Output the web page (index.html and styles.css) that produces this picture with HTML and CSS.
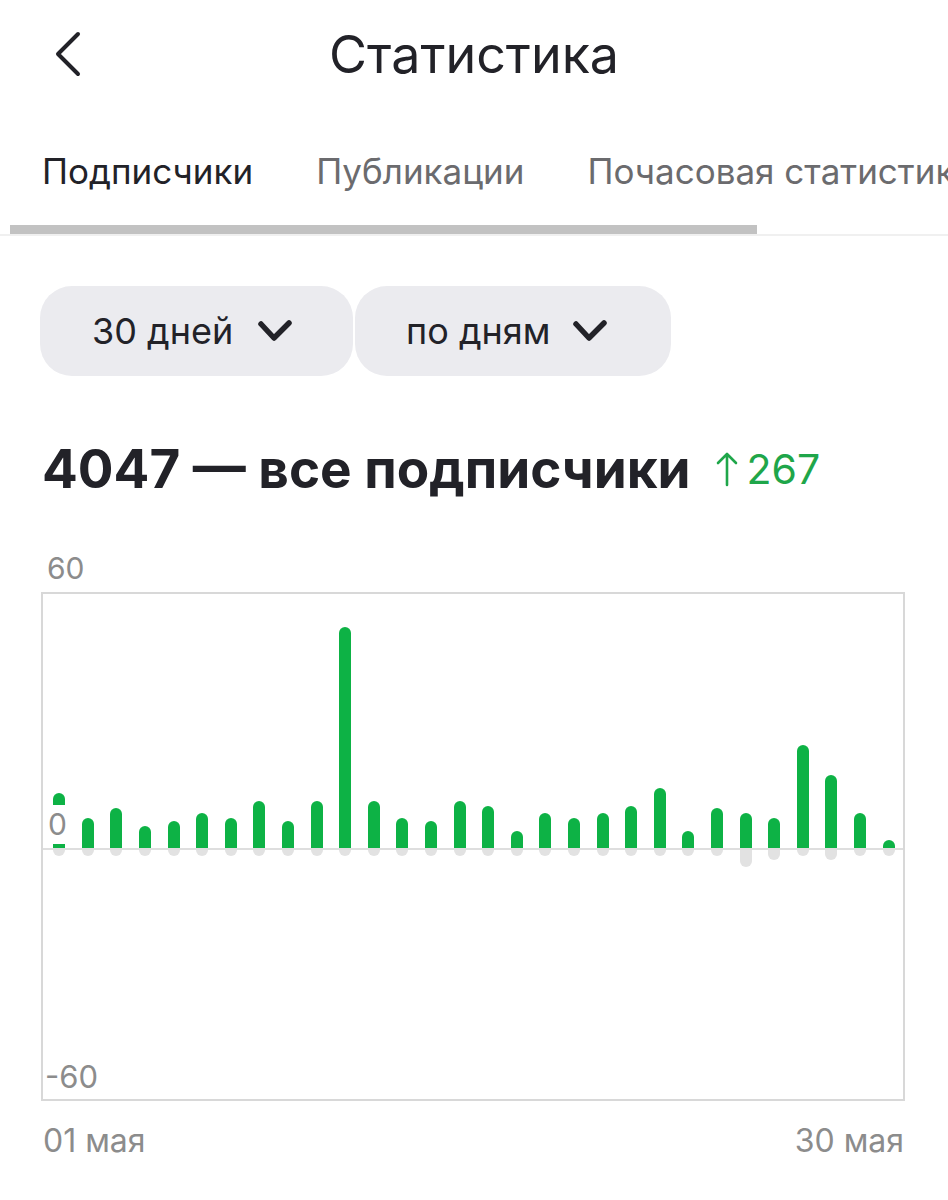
FILE: index.html
```html
<!DOCTYPE html>
<html>
<head>
  <title>Статистика</title>
  <link rel="stylesheet" href="styles.css">
</head>
<body>
  <header class="topbar">
    <a class="back" href="#">
      <svg width="30" height="46" viewBox="0 0 30 46"><path d="M26 3 L6 23 L26 43" fill="none" stroke="#222228" stroke-width="4" stroke-linecap="round" stroke-linejoin="round"/></svg>
    </a>
    <h1>Статистика</h1>
  </header>

  <nav class="tabs">
    <span class="tab active">Подписчики</span>
    <span class="tab">Публикации</span>
    <span class="tab">Почасовая статистика</span>
  </nav>
  <div class="tab-line"><div class="indicator"></div></div>

  <div class="filters">
    <button class="select">30 дней
      <svg width="36" height="24" viewBox="0 0 36 24"><path d="M4 5 L17 19 L32 4" fill="none" stroke="#222228" stroke-width="5.5" stroke-linecap="round" stroke-linejoin="round"/></svg>
    </button>
    <button class="select wide">по дням
      <svg width="36" height="24" viewBox="0 0 36 24"><path d="M4 5 L17 19 L32 4" fill="none" stroke="#222228" stroke-width="5.5" stroke-linecap="round" stroke-linejoin="round"/></svg>
    </button>
  </div>

  <h2 class="total">4047 — все подписчики
    <span class="delta">
      <svg width="24" height="36" viewBox="0 0 24 36"><path d="M12 34 L12 3 M3 12 L12 3 L21 12" fill="none" stroke="#1fa64a" stroke-width="2.6" stroke-linecap="round" stroke-linejoin="round"/></svg>267
    </span>
  </h2>

  <div class="axis-top">60</div>
  <div class="chart">
    <div class="bars">
      <i style="height:55px"></i><i style="height:30px"></i><i style="height:40px"></i><i style="height:22px"></i><i style="height:27px"></i>
      <i style="height:35px"></i><i style="height:30px"></i><i style="height:47px"></i><i style="height:27px"></i><i style="height:47px"></i>
      <i style="height:221px"></i><i style="height:47px"></i><i style="height:30px"></i><i style="height:27px"></i><i style="height:47px"></i>
      <i style="height:42px"></i><i style="height:17px"></i><i style="height:35px"></i><i style="height:30px"></i><i style="height:35px"></i>
      <i style="height:42px"></i><i style="height:60px"></i><i style="height:17px"></i><i style="height:40px"></i><i style="height:35px"></i>
      <i style="height:30px"></i><i style="height:103px"></i><i style="height:73px"></i><i style="height:35px"></i><i style="height:8px"></i>
    </div>
    <div class="zero"></div>
    <div class="lows">
      <i></i><i></i><i></i><i></i><i></i>
      <i></i><i></i><i></i><i></i><i></i>
      <i></i><i></i><i></i><i></i><i></i>
      <i></i><i></i><i></i><i></i><i></i>
      <i></i><i></i><i></i><i></i><i style="height:17px"></i>
      <i style="height:10px"></i><i></i><i style="height:10px"></i><i></i><i></i>
    </div>
    <span class="label-zero">0</span>
    <span class="label-min">-60</span>
  </div>
  <div class="dates">
    <span>01 мая</span>
    <span>30 мая</span>
  </div>
</body>
</html>
```

FILE: styles.css
```css
body {
  margin: 0;
  font-family: Inter, "Noto Sans", sans-serif;
  color: #222228;
  background-color: #fff;
  width: 948px;
  overflow: hidden;
}
.topbar {
  position: relative;
  height: 110px;
  display: flex;
  align-items: center;
  justify-content: center;
}
.back {
  position: absolute;
  left: 52px;
  top: 31px;
  display: block;
  height: 46px;
}
h1 {
  margin: 0;
  font-size: 52px;
  font-weight: 400;
  line-height: 62px;
}
.tabs {
  display: flex;
  gap: 63px;
  padding: 40px 0 33px 42px;
  white-space: nowrap;
  overflow: hidden;
}
.tab {
  font-size: 35px;
  line-height: 42px;
  color: #6b6b6e;
}
.tab.active {
  color: #222228;
}
.tab-line {
  border-bottom: 2px solid #f0f0f0;
}
.indicator {
  margin-left: 10px;
  width: 747px;
  height: 9px;
  background-color: #c2c2c2;
}
.filters {
  display: flex;
  gap: 2px;
  margin: 50px 0 0 40px;
}
.select {
  display: flex;
  align-items: center;
  gap: 24px;
  width: 313px;
  height: 90px;
  padding: 0 0 0 52px;
  border: none;
  border-radius: 32px;
  background-color: #ebebef;
  font-family: inherit;
  font-size: 36px;
  color: #222228;
}
.select.wide {
  width: 316px;
  padding-left: 51px;
  gap: 22px;
}
.total {
  display: flex;
  align-items: center;
  margin: 62px 0 0 42px;
  font-size: 53px;
  font-weight: 700;
  line-height: 62px;
}
.delta {
  display: flex;
  align-items: center;
  gap: 8px;
  margin-left: 24px;
  font-size: 41px;
  font-weight: 400;
  color: #1fa64a;
}
.axis-top {
  margin: 50px 0 6px 47px;
  font-size: 30px;
  line-height: 36px;
  color: #8c8c8c;
}
.chart {
  position: relative;
  box-sizing: border-box;
  margin-left: 41px;
  width: 864px;
  height: 509px;
  padding-left: 2px;
  border: 2px solid #d8d8d8;
  display: flex;
  flex-direction: column;
}
.bars, .lows {
  display: grid;
  grid-template-columns: repeat(30, 1fr);
  justify-items: center;
}
.bars {
  height: 254px;
  align-items: end;
}
.bars i {
  display: block;
  width: 12px;
  border-radius: 6px 6px 0 0;
  background-color: #0db245;
}
.zero {
  height: 2px;
  margin-left: -2px;
  background-color: #dedede;
}
.lows {
  flex: 1;
  align-items: start;
}
.lows i {
  display: block;
  width: 12px;
  height: 6px;
  border-radius: 0 0 6px 6px;
  background-color: #e2e2e2;
}
.label-zero, .label-min {
  position: absolute;
  left: 2px;
  font-size: 30px;
  color: #8c8c8c;
}
.label-zero {
  top: 211px;
  line-height: 39px;
  padding: 0 3px;
  background-color: #fff;
}
.label-min {
  bottom: 4px;
  line-height: 36px;
  font-size: 31px;
}
.dates {
  display: flex;
  justify-content: space-between;
  width: 861px;
  margin: 22px 0 0 43px;
  font-size: 32px;
  line-height: 36px;
  color: #8c8c8c;
}
```
